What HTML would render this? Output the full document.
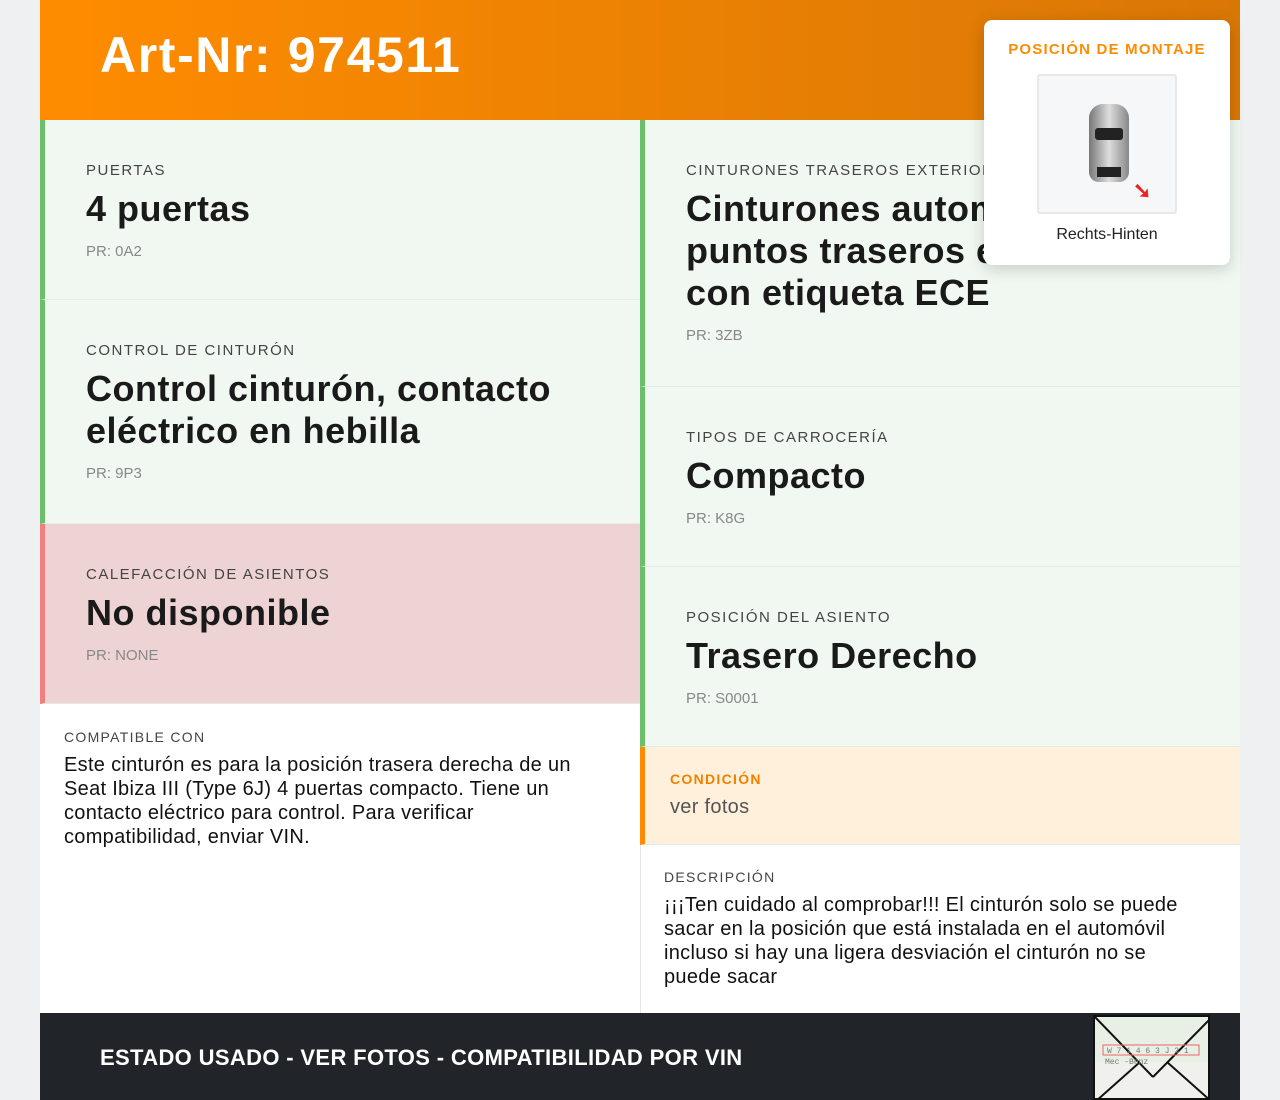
<!DOCTYPE html>
<html><head><meta charset="utf-8"><style>
*{box-sizing:border-box;margin:0;padding:0}
body{width:1280px;height:1100px;background:#eef0f2;font-family:"Liberation Sans",sans-serif;overflow:hidden;position:relative}
.wrap{position:absolute;left:40px;top:0;width:1200px;height:1100px;background:#fff}
.hdr{position:absolute;left:0;top:0;width:1200px;height:120px;background:linear-gradient(90deg,#ff8c00,#d97706)}
.hdr h1{position:absolute;left:60px;top:26px;color:#fff;font-size:50px;font-weight:bold;letter-spacing:1.6px}
.cell{position:absolute;background:#f1f8f1;border-left:5px solid #6abf69;border-bottom:1px solid #e3ece3;padding-left:41px}
.lab{font-size:15px;letter-spacing:1.5px;color:#444;text-transform:uppercase}
.val{font-size:36px;font-weight:bold;color:#1a1a1a;line-height:42px;margin-top:9px;letter-spacing:0.5px;white-space:nowrap}
.pr{font-size:15px;color:#888;margin-top:13px}
.sm{font-size:14px;letter-spacing:1.3px;color:#444}
.txt{font-size:20px;color:#111;line-height:24px;margin-top:8px;letter-spacing:0.3px;white-space:nowrap}
.pop{position:absolute;left:984px;top:20px;width:246px;height:245px;background:#fff;border-radius:8px;box-shadow:0 4px 16px rgba(0,0,0,.18);text-align:center}
.foot{position:absolute;left:0;top:1013px;width:1200px;height:87px;background:#212529}
</style></head><body>
<div class="wrap">
<div class="hdr"><h1>Art-Nr: 974511</h1></div>
<div class="cell" style="left:0;top:120px;width:600px;height:180px;padding-top:42px"><div class="lab">Puertas</div><div class="val">4 puertas</div><div class="pr">PR: 0A2</div></div>
<div class="cell" style="left:0;top:300px;width:600px;height:224px;padding-top:42px"><div class="lab">Control de cinturón</div><div class="val">Control cinturón, contacto<br>eléctrico en hebilla</div><div class="pr">PR: 9P3</div></div>
<div class="cell" style="left:0;top:524px;width:600px;height:180px;padding-top:42px;background:#edd3d3;border-left-color:#f08080"><div class="lab">Calefacción de asientos</div><div class="val">No disponible</div><div class="pr">PR: NONE</div></div>
<div style="position:absolute;left:24px;top:729px;width:560px"><div class="sm">COMPATIBLE CON</div><div class="txt">Este cinturón es para la posición trasera derecha de un<br>Seat Ibiza III (Type 6J) 4 puertas compacto. Tiene un<br>contacto eléctrico para control. Para verificar<br>compatibilidad, enviar VIN.</div></div>
<div class="cell" style="left:600px;top:120px;width:600px;height:267px;padding-top:42px"><div class="lab">Cinturones traseros exteriores</div><div class="val">Cinturones automáticos de 3<br>puntos traseros exteriores<br>con etiqueta ECE</div><div class="pr">PR: 3ZB</div></div>
<div class="cell" style="left:600px;top:387px;width:600px;height:180px;padding-top:42px"><div class="lab">Tipos de carrocería</div><div class="val">Compacto</div><div class="pr">PR: K8G</div></div>
<div class="cell" style="left:600px;top:567px;width:600px;height:180px;padding-top:42px"><div class="lab">Posición del asiento</div><div class="val">Trasero Derecho</div><div class="pr">PR: S0001</div></div>
<div class="cell" style="left:600px;top:747px;width:600px;height:98px;padding-top:24px;padding-left:25px;background:#fff0dc;border-left-color:#ff8c00"><div class="sm" style="color:#f08000;font-weight:bold">CONDICIÓN</div><div style="font-size:20px;color:#555;margin-top:9px;letter-spacing:0.3px">ver fotos</div></div>
<div style="position:absolute;left:600px;top:845px;width:1px;height:168px;background:#e5e5e5"></div>
<div style="position:absolute;left:624px;top:869px;width:560px"><div class="sm">DESCRIPCIÓN</div><div class="txt">¡¡¡Ten cuidado al comprobar!!! El cinturón solo se puede<br>sacar en la posición que está instalada en el automóvil<br>incluso si hay una ligera desviación el cinturón no se<br>puede sacar</div></div>
<div class="foot"><div style="position:absolute;left:60px;top:32px;color:#fff;font-size:22px;font-weight:bold;letter-spacing:0.35px">ESTADO USADO - VER FOTOS - COMPATIBILIDAD POR VIN</div>
<div style="position:absolute;left:1053px;top:2px;width:117px;height:85px;background:#e8efe4;border:2px solid #111;overflow:hidden"><svg width="117" height="85"><rect x="0" y="45" width="117" height="40" fill="#f0f0ec"/><line x1="0" y1="0" x2="58" y2="60" stroke="#111" stroke-width="2"/><line x1="117" y1="0" x2="58" y2="60" stroke="#111" stroke-width="2"/><line x1="0" y1="85" x2="45" y2="45" stroke="#111" stroke-width="2"/><line x1="117" y1="85" x2="72" y2="45" stroke="#111" stroke-width="2"/><rect x="8" y="28" width="96" height="10" fill="none" stroke="#e66" /><text x="12" y="36" font-size="8" fill="#777" font-family="Liberation Mono">W 7 1 4 6 3 J 3 1</text><text x="10" y="47" font-size="8" fill="#777" font-family="Liberation Mono">Mec   -Benz</text></svg></div></div>
</div>
<div class="pop"><div style="margin-top:21px;color:#ff8c00;font-weight:bold;font-size:15px;letter-spacing:1.2px">POSICIÓN DE MONTAJE</div>
<div style="margin:16px auto 0;width:140px;height:140px;background:#f6f7f9;border:2px solid #e6e8ec;border-radius:3px;position:relative">
<div style="position:absolute;left:50px;top:28px;width:40px;height:78px;background:linear-gradient(90deg,#777,#ddd,#888);border-radius:14px 14px 10px 10px"></div>
<div style="position:absolute;left:56px;top:52px;width:28px;height:12px;background:#222;border-radius:3px"></div>
<div style="position:absolute;left:58px;top:91px;width:24px;height:10px;background:#222"></div>
<div style="position:absolute;left:94px;top:102px;color:#e22;font-size:22px;font-weight:bold">➘</div></div>
<div style="margin-top:12px;font-size:16px;color:#222">Rechts-Hinten</div></div>
</body></html>
